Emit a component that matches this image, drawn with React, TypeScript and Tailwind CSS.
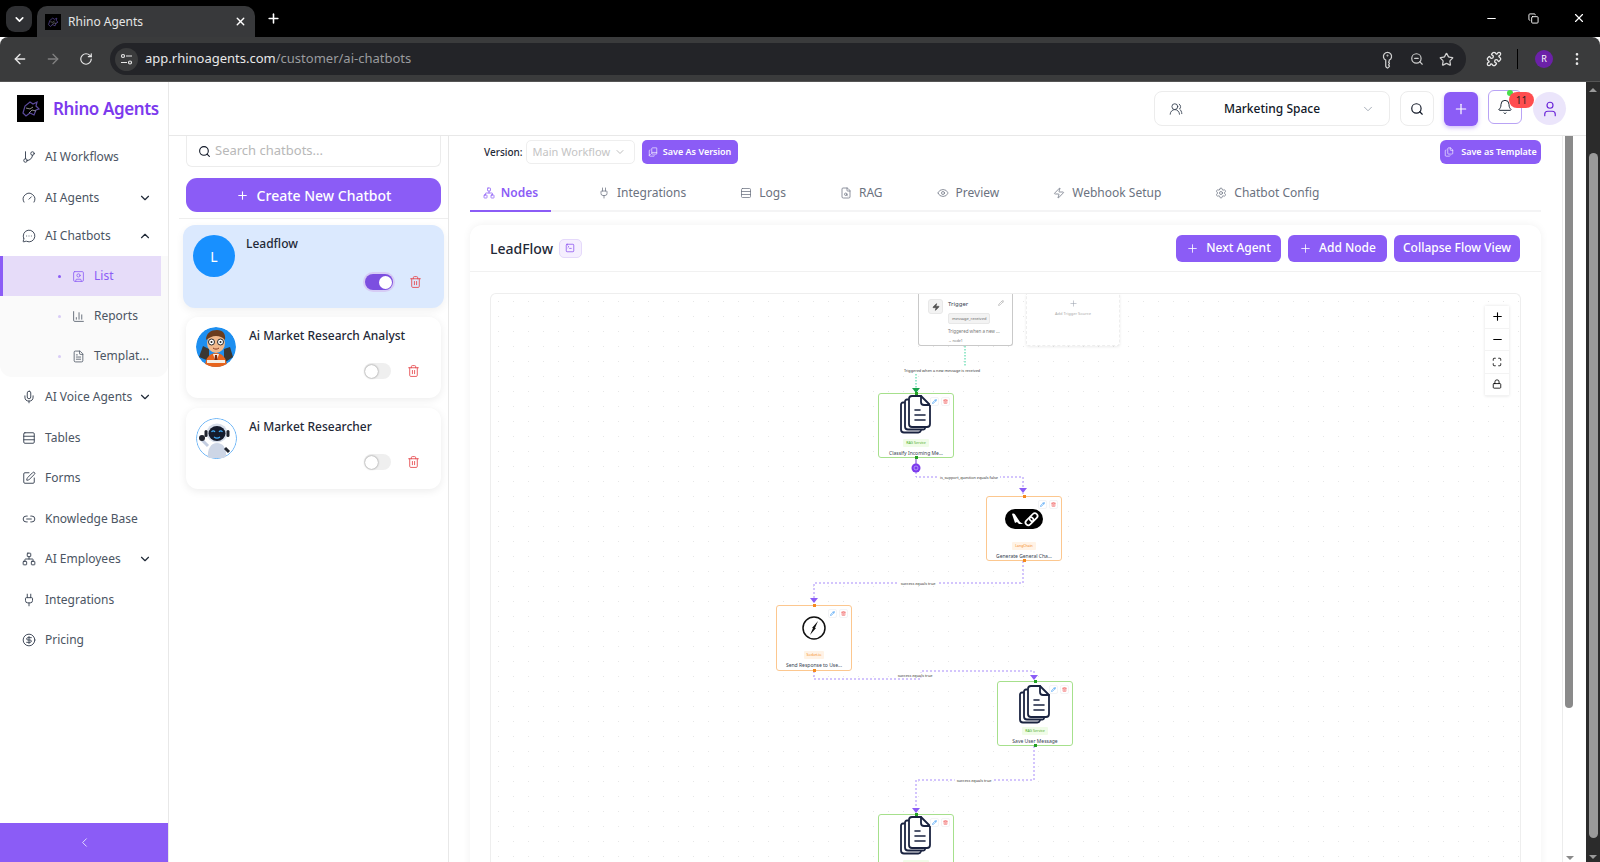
import React from 'react';
import {
  ArrowLeft, ArrowRight, RotateCw, KeyRound, ZoomOut, Star, Puzzle, EllipsisVertical, Minus, Copy, X, Plus,
  ChevronDown, ChevronUp, ChevronLeft, GitBranch, Gauge, MessageCircleMore, Mic, Rows3, SquarePen, Link2, Network,
  Plug, CircleDollarSign, SquareUser, ChartColumn, FileText, Search, Bell, User, UsersRound, Trash2, Pencil, Eye,
  Zap, Settings, FileSearch, TerminalSquare, Maximize, Lock, BookCopy, Files,
} from 'lucide-react';

const navTop = [
  { label: 'AI Workflows', icon: GitBranch, y: 'h-[41px]' },
  { label: 'AI Agents', icon: Gauge, chevron: 'down', y: 'h-[41px]' },
  { label: 'AI Chatbots', icon: MessageCircleMore, chevron: 'up', y: 'h-[36px]' },
];

const navBottom = [
  { label: 'AI Voice Agents', icon: Mic, chevron: 'down' },
  { label: 'Tables', icon: Rows3 },
  { label: 'Forms', icon: SquarePen },
  { label: 'Knowledge Base', icon: Link2 },
  { label: 'AI Employees', icon: Network, chevron: 'down' },
  { label: 'Integrations', icon: Plug },
  { label: 'Pricing', icon: CircleDollarSign },
];

const tabs = [
  { label: 'Integrations', icon: Plug },
  { label: 'Logs', icon: Rows3 },
  { label: 'RAG', icon: FileSearch },
  { label: 'Preview', icon: Eye },
  { label: 'Webhook Setup', icon: Zap },
  { label: 'Chatbot Config', icon: Settings },
];

const RhinoLogo = ({ size }: { size: number }) => (
  <svg width={size} height={size} viewBox="0 0 27 27" className="bg-black">
    <path d="M6 18l2-7 5-4 3 2 4-2-1 4 3 3-3 1-2 5-4-2-4 3z" fill="none" stroke="#5b4b9c" strokeWidth="1.2" />
    <path d="M9 13l4 1 3-2M12 18l3-3 4 1" fill="none" stroke="#9a9a9a" strokeWidth="0.9" />
  </svg>
);

const NavRow = ({ label, icon: Icon, chevron, cls }: any) => (
  <div className={`flex items-center pl-[22px] pr-[16px] text-[12px] text-[#4b5563] ${cls}`}>
    <Icon className="w-[14px] h-[14px] text-[#374151] mr-[9px] shrink-0" strokeWidth={1.6} />
    <span className="flex-1">{label}</span>
    {chevron === 'down' && <ChevronDown className="w-[14px] h-[14px] text-[#1f2937]" strokeWidth={2} />}
    {chevron === 'up' && <ChevronUp className="w-[14px] h-[14px] text-[#1f2937]" strokeWidth={2} />}
  </div>
);

const SubRow = ({ label, icon: Icon, active }: any) => (
  <div
    className={`h-[40px] flex items-center text-[12px] ${
      active ? 'bg-[#e6dcf9] text-[#8b5cf6] border-l-[3px] border-[#8b5cf6] w-[161px] pl-[55px]' : 'text-[#4b5563] pl-[58px]'
    }`}
  >
    <span className={`w-[3px] h-[3px] rounded-full mr-[11px] ${active ? 'bg-[#8b5cf6]' : 'bg-[#d8ccf6]'}`} />
    <Icon className="w-[13px] h-[13px] mr-[9px]" strokeWidth={1.5} />
    <span>{label}</span>
  </div>
);

const Toggle = ({ on }: { on?: boolean }) =>
  on ? (
    <div className="w-[28px] h-[16px] rounded-full bg-[#7c4fe0] ring-[2px] ring-[#d6ccf5] flex items-center justify-end pr-[1px]">
      <div className="w-[13px] h-[13px] rounded-full bg-white" />
    </div>
  ) : (
    <div className="w-[27px] h-[16px] rounded-full bg-[#efefef] flex items-center pl-[1px]">
      <div className="w-[13px] h-[13px] rounded-full bg-white shadow-[0_0_2px_rgba(0,0,0,0.55)]" />
    </div>
  );

const NerdAvatar = () => (
  <svg width="40" height="40" viewBox="0 0 40 40" className="rounded-full">
    <circle cx="20" cy="20" r="20" fill="#1d8ff0" />
    <path d="M3 30l4-11 6 3v12z" fill="#3a3733" />
    <path d="M28 22l6-2 3 10-9 6z" fill="#3a3733" />
    <path d="M9 40c0-9 5-14 11-14s11 5 11 14z" fill="#e8641c" />
    <path d="M17 27l3 9 3-9z" fill="#f7f1e8" />
    <path d="M19 28h2l1 8h-4z" fill="#7c2a10" />
    <rect x="11" y="33" width="18" height="3" fill="#f4efe6" />
    <ellipse cx="20" cy="16" rx="9" ry="10" fill="#f0b98c" />
    <path d="M10 13c0-7 5-10 11-10s9 4 8 10c-3-3-5-4-9-4s-7 2-10 4z" fill="#6b3d1e" />
    <circle cx="15.5" cy="15" r="3" fill="#fff" stroke="#2a2a2a" strokeWidth="1" />
    <circle cx="24.5" cy="15" r="3" fill="#fff" stroke="#2a2a2a" strokeWidth="1" />
    <circle cx="15.5" cy="15" r="1" fill="#222" />
    <circle cx="24.5" cy="15" r="1" fill="#222" />
    <path d="M17 21c2 1.500 4 1.500 6 0" fill="none" stroke="#8a3a22" strokeWidth="1" />
  </svg>
);

const RobotAvatar = () => (
  <svg width="41" height="41" viewBox="0 0 41 41" className="rounded-full bg-white">
    <circle cx="20.5" cy="20.500" r="20" fill="#fff" stroke="#64b0f5" strokeWidth="1" />
    <path d="M12 40c-1-9 3-15 9-15s10 5 9 15z" fill="#cdd6e6" />
    <path d="M12 28l-6-6" stroke="#c3cde0" strokeWidth="3" />
    <circle cx="6" cy="20" r="3" fill="#20242e" />
    <path d="M29 30l4 4" stroke="#20242e" strokeWidth="3" />
    <ellipse cx="21" cy="15" rx="10.500" ry="9.500" fill="#d8dfeb" />
    <ellipse cx="21" cy="15.500" rx="8.500" ry="7.500" fill="#151b2b" />
    <path d="M15.500 14c1-1.500 2.500-1.500 3.500 0M23 14c1-1.500 2.500-1.500 3.500 0M18 19c2 1.500 4 1.500 6 0" fill="none" stroke="#3fa9f5" strokeWidth="1.200" />
    <rect x="8.500" y="12" width="3" height="7" rx="1.500" fill="#20242e" />
    <rect x="30.500" y="12" width="3" height="7" rx="1.500" fill="#20242e" />
  </svg>
);

const ChatbotCard = ({ name, avatar, on, cls, rowCls }: any) => (
  <div className={`rounded-[12px] relative ${cls}`}>
    {avatar}
    <div className="absolute left-[63px] top-[10px] text-[12px] font-medium text-[#1f2937] whitespace-nowrap">{name}</div>
    <div className={`absolute flex items-center gap-[16px] ${rowCls}`}>
      <Toggle on={on} />
      <Trash2 className="w-[13px] h-[14px] text-[#e5484d]" strokeWidth={1.6} />
    </div>
  </div>
);

const DocsIcon = () => (
  <svg width="32" height="40" viewBox="0 0 32 40" fill="none" stroke="#1a2340" strokeWidth="1.800" strokeLinejoin="round" strokeLinecap="round">
    <path d="M4 7.500h-1a2 2 0 0 0-2 2v25a3 3 0 0 0 3 3h14a3 3 0 0 0 3-2" />
    <path d="M8 4.500h-1a2 2 0 0 0-2 2v25a3 3 0 0 0 3 3h15a2 2 0 0 0 2-1" />
    <path d="M12 1h9l9 9v19a3 3 0 0 1-3 3h-15a3 3 0 0 1-3-3v-25a3 3 0 0 1 3-3z" fill="#fff" />
    <path d="M21 1v6a3 3 0 0 0 3 3h6" />
    <path d="M15 15h5M15 20h10M15 25h10" strokeWidth="1.600" />
  </svg>
);

const LangIcon = () => (
  <svg width="38" height="20" viewBox="0 0 38 20">
    <rect width="38" height="20" rx="10" fill="#000" />
    <path d="M7 5c2-1 3 0 4 2l4 6 3 2h-4l-2-2-2 1-1-3-1-3z" fill="#fff" />
    <g fill="none" stroke="#fff" strokeWidth="1.700">
      <rect x="20" y="9.500" width="9" height="5.500" rx="2.700" transform="rotate(-45 24.500 12.200)" />
      <rect x="24" y="5.500" width="9" height="5.500" rx="2.700" transform="rotate(-45 28.500 8.200)" />
    </g>
  </svg>
);

const BoltIcon = () => (
  <svg width="24" height="24" viewBox="0 0 24 24">
    <circle cx="12" cy="12" r="11" fill="#fff" stroke="#111" strokeWidth="1.500" />
    <path d="M16 5l-6 7h3zM8 19l6-7h-3z" fill="#111" />
  </svg>
);

const flowNodes = [
  { x: 387, y: 99, h: 65, tone: 'green', badge: 'RAG Service', title: 'Classify Incoming Me...', icon: 'docs', iconTop: 1 },
  { x: 495, y: 202, h: 65, tone: 'orange', badge: 'LangChain', title: 'Generate General Cha...', icon: 'lang', iconTop: 12 },
  { x: 285, y: 311, h: 66, tone: 'orange', badge: 'Socket.io', title: 'Send Response to Use...', icon: 'bolt', iconTop: 10 },
  { x: 506, y: 387, h: 65, tone: 'green', badge: 'RAG Service', title: 'Save User Message', icon: 'docs', iconTop: 3 },
  { x: 387, y: 520, h: 65, tone: 'green', badge: 'RAG Service', title: 'Store Message...', icon: 'docs', iconTop: 1 },
];

const FlowNode = ({ n }: any) => {
  const green = n.tone === 'green';
  return (
    <div
      className={`absolute w-[76px] bg-white rounded-[3px] border-[1.500px] ${green ? 'border-[#a6e08c]' : 'border-[#fcc78f]'}`}
      style={{ left: n.x, top: n.y, height: n.h }}
    >
      <div className={`absolute -top-[2px] left-[36px] w-[3px] h-[3px] ${green ? 'bg-[#22a022]' : 'bg-[#f58a1f]'}`} />
      <div className={`absolute -bottom-[2px] left-[36px] w-[3px] h-[3px] ${green ? 'bg-[#22a022]' : 'bg-[#f58a1f]'}`} />
      <div className="absolute left-0 right-0 flex justify-center" style={{ top: n.iconTop }}>
        {n.icon === 'docs' && <DocsIcon />}
        {n.icon === 'lang' && <LangIcon />}
        {n.icon === 'bolt' && <BoltIcon />}
      </div>
      <div className="absolute top-[3px] right-[3px] flex gap-[2px]">
        <div className="w-[9px] h-[9px] rounded-[2px] bg-white border border-[#f3f4f6] flex items-center justify-center">
          <Pencil className="w-[5px] h-[5px] text-[#3b9cf5]" strokeWidth={3} />
        </div>
        <div className="w-[9px] h-[9px] rounded-[2px] bg-white border border-[#f3f4f6] flex items-center justify-center">
          <Trash2 className="w-[5px] h-[5px] text-[#f26d6d]" strokeWidth={3} />
        </div>
      </div>
      <div className="absolute top-[45px] left-0 right-0 flex justify-center">
        <span className={`text-[3.500px] leading-[8px] px-[3px] rounded-[1px] ${green ? 'bg-[#f0fce8] text-[#4caf28]' : 'bg-[#fff3e6] text-[#f58a1f]'}`}>{n.badge}</span>
      </div>
      <div className="absolute top-[56px] left-0 right-0 text-center text-[5px] leading-[7px] text-[#374151] whitespace-nowrap">{n.title}</div>
    </div>
  );
};

const edgeLabels = [
  { x: 451, y: 76, t: 'Triggered when a new message is received' },
  { x: 478, y: 183, t: 'is_support_question equals false' },
  { x: 427, y: 289, t: 'success equals true' },
  { x: 424, y: 381, t: 'success equals true' },
  { x: 483, y: 486, t: 'success equals true' },
];

const FlowCanvas = () => (
  <div className="relative mx-[20px] mt-[21px] h-[600px] border-t border-x border-[#eeeeee] rounded-t-[6px] bg-[radial-gradient(#e7e7e7_0.7px,transparent_0.8px)] bg-[size:15px_15px]">
    <svg width="1030" height="600" className="absolute left-0 top-0 overflow-visible" fill="none">
      <g stroke="#34d399" strokeWidth="1" strokeDasharray="1.500 1.500">
        <path d="M474 52V72" />
        <path d="M425 80V98" />
      </g>
      <g stroke="#a78bfa" strokeWidth="1" strokeDasharray="2 2">
        <path d="M425 178V183H532V200" />
        <path d="M532 267V289H323V308" />
        <path d="M323 377V385H430V377H543V385" />
        <path d="M543 452V486H425V518" />
      </g>
      <g fill="#8b5cf6">
        <path d="M528 194h8l-4 5z" />
        <path d="M319 304h8l-4 5z" />
        <path d="M539 381h8l-4 5z" />
        <path d="M421 514h8l-4 5z" />
      </g>
      <path d="M421 94h8l-4 5z" fill="#16a34a" />
      <path d="M425 164V170" stroke="#b79bea" strokeWidth="2" />
      <circle cx="425" cy="174" r="4.500" fill="#7c3aed" />
      <circle cx="425" cy="174" r="2" fill="none" stroke="#c4b5fd" strokeWidth="0.700" />
    </svg>

    <div className="absolute left-[427px] top-0 w-[95px] h-[52px] bg-white rounded-b-[3px] border-x-[1.500px] border-b-[1.500px] border-[#c9c9c9]">
      <div className="absolute left-[9px] top-[5px] w-[15px] h-[15px] rounded-[3px] bg-[#f3f3f3] border border-[#e8e8e8] flex items-center justify-center">
        <Zap className="w-[8px] h-[8px] text-[#555]" fill="#555" />
      </div>
      <div className="absolute left-[29px] top-[6px] text-[6px] leading-[8px] text-[#374151]">Trigger</div>
      <Pencil className="absolute right-[8px] top-[6px] w-[6px] h-[6px] text-[#aaa]" strokeWidth={2.500} />
      <div className="absolute left-[29px] top-[19px] h-[11px] px-[3px] rounded-[2px] bg-[#f3f3f3] border border-[#e8e8e8] text-[4px] leading-[9px] text-[#666]">message_received</div>
      <div className="absolute left-[29px] top-[34px] text-[4.500px] leading-[6px] text-[#777] whitespace-nowrap">Triggered when a new ...</div>
      <div className="absolute left-[29px] top-[44px] text-[3.500px] leading-[5px] text-[#777]">→ node1</div>
    </div>

    <div className="absolute left-[535px] top-0 w-[94px] h-[52px] bg-white rounded-b-[3px] border border-dashed border-t-0 border-[#eeeeee] shadow-[0_1px_3px_rgba(0,0,0,0.08)] flex flex-col items-center pt-[5px]">
      <Plus className="w-[9px] h-[9px] text-[#9ca3af]" strokeWidth={1.500} />
      <div className="text-[4px] leading-[8px] mt-[2px] text-[#aaa]">Add Trigger Source</div>
    </div>

    {flowNodes.map((n) => (
      <FlowNode key={n.x + '-' + n.y} n={n} />
    ))}

    {edgeLabels.map((l) => (
      <div
        key={l.x + '-' + l.y}
        className="absolute -translate-x-1/2 -translate-y-1/2 bg-white px-[2px] text-[3.800px] leading-[5px] text-[#333] whitespace-nowrap"
        style={{ left: l.x, top: l.y }}
      >
        {l.t}
      </div>
    ))}

    <div className="absolute left-[994px] top-[12px] w-[24px] bg-white shadow-[0_0_3px_rgba(0,0,0,0.12)] flex flex-col">
      {[Plus, Minus, Maximize, Lock].map((Icon, i) => (
        <div key={i} className="h-[22.500px] flex items-center justify-center border-b border-[#f3f3f3]">
          <Icon className={i > 1 ? 'w-[10px] h-[10px] text-black' : 'w-[13px] h-[13px] text-black'} strokeWidth={2} />
        </div>
      ))}
    </div>
  </div>
);

export default function App() {
  return (
    <div className="w-[1600px] h-[862px] overflow-hidden flex flex-col bg-white font-['Noto_Sans',sans-serif]">
      {/* browser tab strip */}
      <div className="h-[37px] bg-black flex items-end pl-[6px] shrink-0 relative">
        <div className="w-[26px] h-[26px] rounded-[9px] bg-[#2f3033] flex items-center justify-center mb-[5px] mr-[5px]">
          <ChevronDown className="w-[13px] h-[13px] text-white" strokeWidth={3} />
        </div>
        <div className="w-[218px] h-[31px] bg-[#38393b] rounded-t-[10px] flex items-center pl-[8px] pr-[8px]">
          <RhinoLogo size={16} />
          <span className="ml-[7px] flex-1 text-[12px] text-[#e5e5e5]">Rhino Agents</span>
          <X className="w-[13px] h-[13px] text-white" strokeWidth={2.500} />
        </div>
        <Plus className="w-[15px] h-[15px] text-white ml-[11px] mb-[11px]" strokeWidth={2.500} />
        <div className="flex-1" />
        <Minus className="w-[13px] h-[13px] text-white mb-[12px] mr-[30px]" />
        <Copy className="w-[11px] h-[11px] text-white mb-[13px] mr-[33px]" />
        <X className="w-[14px] h-[14px] text-white mb-[12px] mr-[14px]" />
      </div>

      {/* browser toolbar */}
      <div className="h-[45px] bg-[#3a3b3c] rounded-t-[8px] flex items-center shrink-0 pl-[12px] border-b border-[#555]">
        <ArrowLeft className="w-[16px] h-[16px] text-[#e8e8e8]" strokeWidth={2} />
        <ArrowRight className="w-[16px] h-[16px] text-[#808080] ml-[17px]" strokeWidth={2} />
        <RotateCw className="w-[14px] h-[14px] text-[#e8e8e8] ml-[18px]" strokeWidth={2} />
        <div className="ml-[17px] w-[1356px] h-[32px] rounded-full bg-[#232428] flex items-center pl-[5px] pr-[12px]">
          <div className="w-[23px] h-[23px] rounded-full bg-[#3a3b3c] flex items-center justify-center">
            <svg width="13" height="13" viewBox="0 0 13 13" fill="none" stroke="#e8e8e8" strokeWidth="1.200">
              <circle cx="3" cy="3" r="1.500" />
              <path d="M6 3h6M1 9.500h6" />
              <circle cx="10" cy="9.500" r="1.500" />
            </svg>
          </div>
          <span className="ml-[7px] flex-1 text-[13px] text-[#e8e8e8]">
            app.rhinoagents.com<span className="text-[#9a9b9e]">/customer/ai-chatbots</span>
          </span>
          <KeyRound className="w-[15px] h-[15px] text-[#cfcfcf] -rotate-45" />
          <ZoomOut className="w-[14px] h-[14px] text-[#cfcfcf] ml-[15px]" />
          <Star className="w-[15px] h-[15px] text-[#cfcfcf] ml-[15px]" />
        </div>
        <Puzzle className="w-[16px] h-[16px] text-[#e8e8e8] ml-[20px]" />
        <div className="w-px h-[20px] bg-black ml-[15px]" />
        <div className="w-[18px] h-[18px] rounded-full bg-[#6b21a8] text-white text-[9px] flex items-center justify-center ml-[17px]">R</div>
        <EllipsisVertical className="w-[16px] h-[16px] text-[#e8e8e8] ml-[16px]" />
      </div>

      <div className="flex-1 min-h-0 flex">
        {/* sidebar */}
        <aside className="w-[169px] shrink-0 border-r border-[#e8e8e8] flex flex-col">
          <div className="h-[53px] flex items-center pl-[17px] shrink-0">
            <RhinoLogo size={27} />
            <span className="ml-[9px] text-[17px] font-semibold text-[#7c3aed] tracking-[-0.4px]">Rhino Agents</span>
          </div>
          <div className="pt-[1px]">
            {navTop.map((n) => (
              <NavRow key={n.label} label={n.label} icon={n.icon} chevron={n.chevron} cls={n.y} />
            ))}
            <div className="bg-[#fafafa] rounded-b-[12px] mt-[2px] h-[121px]">
              <SubRow label="List" icon={SquareUser} active />
              <SubRow label="Reports" icon={ChartColumn} />
              <SubRow label="Templat..." icon={FileText} />
            </div>
            {navBottom.map((n) => (
              <NavRow key={n.label} label={n.label} icon={n.icon} chevron={n.chevron} cls="h-[40.500px]" />
            ))}
          </div>
          <div className="mt-auto h-[39px] bg-[#8b5cf6] flex items-center justify-center shrink-0">
            <ChevronLeft className="w-[15px] h-[15px] text-[#e9e2fd]" strokeWidth={1.500} />
          </div>
        </aside>

        <div className="flex-1 min-w-0 flex flex-col">
          {/* app header */}
          <header className="h-[54px] shrink-0 border-b border-[#e8e8e8] flex items-center justify-end relative pr-[20px]">
            <div className="w-[236px] h-[35px] rounded-[8px] border border-[#ececec] flex items-center pl-[14px] pr-[14px] mr-[10px]">
              <UsersRound className="w-[14px] h-[14px] text-[#374151]" strokeWidth={1.500} />
              <span className="flex-1 text-center text-[12px] font-medium text-[#111827]">Marketing Space</span>
              <ChevronDown className="w-[14px] h-[14px] text-[#9ca3af]" strokeWidth={1.500} />
            </div>
            <div className="w-[34px] h-[35px] rounded-[8px] border border-[#ececec] flex items-center justify-center mr-[10px]">
              <Search className="w-[14px] h-[14px] text-[#111827]" strokeWidth={2} />
            </div>
            <div className="w-[34px] h-[34px] rounded-[6px] bg-[#8b5cf6] flex items-center justify-center mr-[10px] shadow-[0_2px_4px_rgba(139,92,246,0.4)]">
              <Plus className="w-[16px] h-[16px] text-white" strokeWidth={1.800} />
            </div>
            <div className="w-[34px] h-[34px] rounded-[6px] border border-[#b9a3f5] flex items-center justify-center mr-[11px] relative -mt-[3px]">
              <Bell className="w-[16px] h-[16px] text-[#1f2937]" strokeWidth={1.500} />
              <div className="absolute -top-[1px] left-[18px] w-[6px] h-[6px] rounded-full bg-[#4ade4a]" />
              <div className="absolute top-[1px] left-[20px] w-[25px] h-[16px] rounded-full bg-[#ff4d4f] text-[10px] leading-[16px] text-center text-[#222]">11</div>
            </div>
            <div className="w-[33px] h-[33px] rounded-full bg-[#ebe5fb] flex items-center justify-center">
              <User className="w-[18px] h-[18px] text-[#6d28d9]" strokeWidth={1.600} />
            </div>
          </header>

          <div className="flex-1 min-h-0 flex">
            {/* chatbot list */}
            <section className="w-[280px] shrink-0 border-r border-[#e8e8e8]">
              <div className="ml-[17px] w-[255px] h-[31px] border border-t-0 border-[#ececec] rounded-b-[6px] flex items-center pl-[11px]">
                <Search className="w-[13px] h-[13px] text-[#111827] mr-[4px]" strokeWidth={2} />
                <span className="text-[13px] text-[#b8b8b8]">Search chatbots...</span>
              </div>
              <div className="ml-[17px] mt-[11px] w-[255px] h-[34px] rounded-[11px] bg-[#8b5cf6] flex items-center justify-center text-white text-[14px] font-medium">
                <Plus className="w-[13px] h-[13px] mr-[8px]" strokeWidth={2} />
                Create New Chatbot
              </div>
              <div className="ml-[10px] mt-[6px] h-px bg-[#eeeeee]" />
              <div className="mt-[6px] ml-[14px] w-[261px]">
                <ChatbotCard
                  name="Leadflow"
                  on
                  cls="h-[83px] bg-[#dbe9fe] shadow-[0_3px_8px_rgba(0,0,0,0.06)]"
                  rowCls="left-[182px] top-[49px]"
                  avatar={
                    <div className="absolute left-[10px] top-[10px] w-[42px] h-[42px] rounded-full bg-[#1890ff] flex items-center justify-center text-white text-[14px]">L</div>
                  }
                />
              </div>
              <div className="mt-[9px] ml-[17px] w-[255px] flex flex-col gap-[10px]">
                <ChatbotCard
                  name="Ai Market Research Analyst"
                  cls="h-[81px] bg-white shadow-[0_2px_8px_rgba(0,0,0,0.08)]"
                  rowCls="left-[178px] top-[46px]"
                  avatar={
                    <div className="absolute left-[10px] top-[10px]">
                      <NerdAvatar />
                    </div>
                  }
                />
                <ChatbotCard
                  name="Ai Market Researcher"
                  cls="h-[81px] bg-white shadow-[0_2px_8px_rgba(0,0,0,0.08)]"
                  rowCls="left-[178px] top-[46px]"
                  avatar={
                    <div className="absolute left-[10px] top-[10px]">
                      <RobotAvatar />
                    </div>
                  }
                />
              </div>
            </section>

            {/* main */}
            <main className="flex-1 min-w-0 flex">
              <div className="w-[1113px] shrink-0 px-[21px] overflow-hidden">
                <div className="flex items-center pt-[4px] pl-[14px]">
                  <span className="text-[10px] font-medium text-[#1f2937] mr-[3px]">Version:</span>
                  <div className="w-[109px] h-[24px] border border-[#eeeeee] rounded-[5px] flex items-center pl-[6px] pr-[8px]">
                    <span className="flex-1 text-[11px] text-[#c4c4c4]">Main Workflow</span>
                    <ChevronDown className="w-[12px] h-[12px] text-[#a8a8a8]" strokeWidth={1.500} />
                  </div>
                  <div className="ml-[7px] w-[96px] h-[24px] rounded-[5px] bg-[#8b5cf6] flex items-center justify-center text-white text-[9px] font-semibold">
                    <BookCopy className="w-[10px] h-[10px] mr-[5px]" strokeWidth={1.500} />
                    Save As Version
                  </div>
                  <div className="ml-auto w-[101px] h-[24px] rounded-[6px] bg-[#8b5cf6] flex items-center justify-center text-white text-[9px] font-semibold">
                    <Files className="w-[10px] h-[10px] mr-[7px]" strokeWidth={1.500} />
                    Save as Template
                  </div>
                </div>

                <div className="mt-[12px] h-[36px] border-b-2 border-[#f4f4f5] flex items-stretch gap-[28px] text-[12px]">
                  <div className="w-[81px] flex items-center justify-center gap-[6px] -mb-[2px] border-b-2 border-[#8b5cf6] text-[#8b5cf6] font-semibold mr-[6px]">
                    <Network className="w-[12px] h-[12px]" strokeWidth={1.500} />
                    Nodes
                  </div>
                  {tabs.map((t) => (
                    <div key={t.label} className="flex items-center gap-[7px] px-[13px] text-[#6b7280]">
                      <t.icon className="w-[12px] h-[12px]" strokeWidth={1.500} />
                      {t.label}
                    </div>
                  ))}
                </div>

                <div className="mt-[13px] h-[700px] rounded-t-[12px] bg-white shadow-[0_0_8px_rgba(0,0,0,0.06)]">
                  <div className="h-[47px] border-b border-[#f1f1f1] flex items-center pl-[20px] pr-[21px]">
                    <span className="text-[14px] font-medium text-[#1f2937]">LeadFlow</span>
                    <div className="ml-[6px] w-[23px] h-[19px] rounded-[5px] bg-[#f5effe] border border-[#e5d9fb] flex items-center justify-center">
                      <TerminalSquare className="w-[10px] h-[10px] text-[#7c3aed]" strokeWidth={1.600} />
                    </div>
                    <div className="ml-auto flex gap-[7px] text-white text-[12px] font-medium">
                      <div className="w-[105px] h-[27px] rounded-[6px] bg-[#8b5cf6] flex items-center justify-center">
                        <Plus className="w-[13px] h-[13px] mr-[7px]" strokeWidth={1.500} />
                        Next Agent
                      </div>
                      <div className="w-[99px] h-[27px] rounded-[6px] bg-[#8b5cf6] flex items-center justify-center">
                        <Plus className="w-[13px] h-[13px] mr-[7px]" strokeWidth={1.500} />
                        Add Node
                      </div>
                      <div className="w-[126px] h-[27px] rounded-[6px] bg-[#8b5cf6] flex items-center justify-center">Collapse Flow View</div>
                    </div>
                  </div>
                  <FlowCanvas />
                </div>
              </div>

              {/* inner scrollbar */}
              <div className="w-[24px] shrink-0 border-l border-[#ececec] pl-[2px] relative">
                <div className="w-[8px] h-[572px] bg-[#8a8a8a] rounded-b-[4px]" />
                <div className="absolute left-[3px] bottom-[2px] w-0 h-0 border-x-[4px] border-x-transparent border-t-[4px] border-t-[#8a8a8a]" />
              </div>
            </main>
          </div>
        </div>

        {/* page scrollbar */}
        <div className="w-[14px] shrink-0 bg-[#2b2b2b] relative">
          <div className="absolute left-[3px] top-[6px] w-0 h-0 border-x-[4px] border-x-transparent border-b-[4px] border-b-[#9a9a9a]" />
          <div className="absolute left-[3px] top-[71px] w-[9px] h-[685px] rounded-full bg-[#9a9a9a]" />
          <div className="absolute left-[3px] bottom-[3px] w-0 h-0 border-x-[4px] border-x-transparent border-t-[4px] border-t-[#9a9a9a]" />
        </div>
      </div>
    </div>
  );
}
